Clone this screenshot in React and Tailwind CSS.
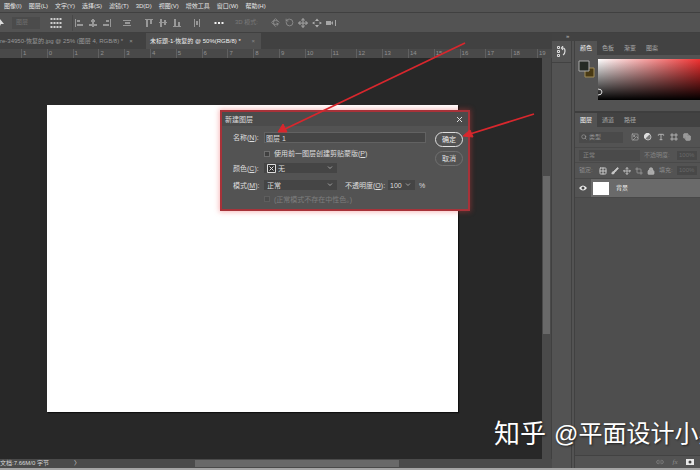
import React from "react";
import {
  Rotate3d, RotateCcw, Move, Image, Type, Frame, Copy, Search, Brush, Crop, Lock, Link2, Grid2x2,
} from "lucide-react";

const menus = ["图像(I)", "图层(L)", "文字(Y)", "选择(S)", "滤镜(T)", "3D(D)", "视图(V)", "增效工具", "窗口(W)", "帮助(H)"];
const marks = [1, 0, 1, 2, 3, 4, 5, 6, 7, 8, 9, 10, 11, 12, 13, 14, 15, 16, 17, 18];

function Chevron() {
  return (
    <svg viewBox="0 0 6 4" className="pointer-events-none absolute right-1 h-1 w-1.5" fill="none" stroke="#a0a0a0">
      <path d="M1 .5l2 2 2-2" />
    </svg>
  );
}

function Tool({ label, children, className = "" }) {
  return (
    <button type="button" aria-label={label} className={`flex h-3 w-3 shrink-0 items-center justify-center ${className}`}>
      {children}
    </button>
  );
}

function Bars({ d }) {
  return (
    <svg viewBox="0 0 8 8" className="h-2 w-2" fill="#989898">
      <path d={d} />
    </svg>
  );
}

function OptionsBar() {
  return (
    <div className="flex h-5 items-center border-b border-[#404040] text-[#989898]">
      <svg viewBox="0 0 4 8" className="h-2 w-1" fill="#ddd"><path d="M0 0l4 5H1L0 7z" /></svg>
      <div className="relative ml-2 flex h-3 w-7 items-center bg-[#4b4b4b]">
        <select aria-label="自动选择" disabled className="w-full appearance-none pl-1 text-[#707070]"><option>图层</option></select>
      </div>
      <Tool label="显示变换控件" className="ml-2.5">
        <svg viewBox="0 0 11 10" className="h-2.5 w-3" fill="#cfcfcf">
          <path d="M0 0h2v2H0zM3 0h2v2H3zM6 0h2v2H6zM9 0h2v2H9zM0 4h2v2H0zM3 4h2v2H3zM6 4h2v2H6zM9 4h2v2H9zM0 8h2v2H0zM3 8h2v2H3zM6 8h2v2H6zM9 8h2v2H9z" />
        </svg>
      </Tool>
      <span className="ml-2.5 h-4 border-l border-[#484848]" />
      <Tool label="左对齐"><Bars d="M0 0h1v8H0zM2 1h3v2H2zM2 5h6v2H2z" /></Tool>
      <Tool label="水平居中对齐" className="ml-0.5"><Bars d="M3 0h2v8H3zM2 1h4v2H2zM0 5h8v2H0z" /></Tool>
      <Tool label="右对齐" className="ml-0.5"><Bars d="M7 0h1v8H7zM3 1h3v2H3zM0 5h6v2H0z" /></Tool>
      <Tool label="分布" className="ml-2"><Bars d="M0 1h8v1H0zM2 3h5v2H2zM0 6h8v1H0z" /></Tool>
      <Tool label="顶对齐" className="ml-2.5"><Bars d="M0 0h8v1H0zM1 1h2v7H1zM5 1h2v4H5z" /></Tool>
      <Tool label="垂直居中对齐" className="ml-0.5"><Bars d="M0 3h8v1H0zM1 0h2v8H1zM5 1h2v5H5z" /></Tool>
      <Tool label="底对齐" className="ml-0.5"><Bars d="M0 7h8v1H0zM1 0h2v7H1zM5 3h2v4H5z" /></Tool>
      <Tool label="垂直分布" className="ml-2"><Bars d="M1 0h1v8H1zM3 2h2v4H3zM6 0h1v8H6z" /></Tool>
      <Tool label="更多选项" className="ml-2.5">
        <svg viewBox="0 0 9 2" className="h-0.5 w-2.5" fill="#f2f2f2"><path d="M0 0h2v2H0zM3.5 0h2v2h-2zM7 0h2v2H7z" /></svg>
      </Tool>
      <span className="ml-2.5 w-7 text-[#7a7a7a]">3D 模式:</span>
      <Tool label="环绕" className="ml-1.5"><Rotate3d size={9} /></Tool>
      <Tool label="滚动" className="ml-0.5"><RotateCcw size={9} /></Tool>
      <Tool label="平移" className="ml-0.5"><Move size={10} strokeWidth={3} /></Tool>
      <Tool label="滑动" className="ml-0.5">
        <svg viewBox="0 0 10 9" className="h-2.5 w-2.5" fill="#b0b0b0"><path d="M5 0l2 2.5H3zM5 9L3 6.500h4zM0 4.500L2.500 3v3zM10 4.500L7.500 3v3z" /></svg>
      </Tool>
      <Tool label="缩放相机" className="ml-0.5">
        <svg viewBox="0 0 10 6" className="h-1.5 w-2.5" fill="#a6a6a6"><path d="M0 1h5v4H0zM5 3l2-2v4zM9 0h1v6H9z" /></svg>
      </Tool>
    </div>
  );
}

function Editor() {
  return (
    <main className="flex min-w-0 flex-1 flex-col">
      <div className="flex h-4 bg-[#414141]" role="tablist">
        <button type="button" role="tab" aria-selected="false" className="flex w-[146px] items-center gap-1.5 whitespace-nowrap text-[#999]">
          <span>re-34950-恢复的.jpg @ 25% (图层 4, RGB/8) *</span><span>×</span>
        </button>
        <button type="button" role="tab" aria-selected="true" className="flex w-[115px] items-center justify-between bg-[#505050] pr-1.5 pl-1 whitespace-nowrap text-[#f0f0f0]">
          <span>未标题-1-恢复的 @ 50%(RGB/8) *</span><span className="text-[#8a8a8a]">×</span>
        </button>
      </div>
      <div className="flex h-[9px] items-center bg-[#494949] pl-[21px] text-[#929292]">
        {marks.map((m, i) => (
          <span key={i} className="min-w-0 flex-1 border-l border-[#606060] pl-px">{m}</span>
        ))}
        <span className="w-[15px] border-l border-[#606060] pl-px">19</span>
      </div>
      <div className="flex flex-1">
        <div className="flex flex-1 bg-[#282828] pt-[47px] pr-[84px] pb-[47px] pl-[47px]">
          <div className="flex-1 bg-white shadow-[1px_1px_1px_#111]" />
        </div>
        <div className="flex w-2.5 flex-col border-r border-[#404040] bg-[#4a4a4a] px-px pt-[118px]">
          <div className="h-[158px] bg-[#696969]" />
        </div>
      </div>
      <div className="flex h-[9px] items-center bg-[#4a4a4a] text-[#d8d8d8]">
        <span className="w-[74px] whitespace-nowrap">文档:7.66M/0 字节</span>
        <span className="w-[121px]">〉</span>
        <div className="h-[7px] flex-1 pr-[153px]"><div className="h-full bg-[#696969]" /></div>
      </div>
    </main>
  );
}

function PanelTabs({ names }) {
  return (
    <div className="flex h-[14px] bg-[#424242]" role="tablist">
      {names.map((n, i) => (
        <button key={n} type="button" role="tab" aria-selected={i === 0} className={i === 0 ? "w-[22px] bg-[#535353] text-[#f0f0f0]" : "w-[22px] text-[#a8a8a8]"}>{n}</button>
      ))}
    </div>
  );
}

function Layers() {
  return (
    <section className="flex flex-1 flex-col border-t-2 border-[#3e3e3e]">
      <PanelTabs names={["图层", "通道", "路径"]} />
      <div className="flex h-5 items-center pl-1 text-[#b0b0b0]">
        <div className="flex h-[11px] w-11 items-center gap-0.5 bg-[#4a4a4a] pl-0.5">
          <Search size={6} />
          <select aria-label="筛选类型" className="w-6 appearance-none text-[#909090]"><option>类型</option></select>
        </div>
        <Tool label="像素图层" className="ml-1.5"><Image size={8} /></Tool>
        <Tool label="调整图层" className="ml-px">
          <svg viewBox="0 0 8 8" className="h-2 w-2"><circle cx="4" cy="4" r="3" fill="#777" stroke="#b8b8b8" /><path d="M1 6A3 3 0 0 1 6 1z" fill="#ddd" /></svg>
        </Tool>
        <Tool label="文字图层" className="ml-px"><Type size={8} strokeWidth={3} /></Tool>
        <Tool label="形状图层" className="ml-px"><Frame size={8} strokeWidth={3} /></Tool>
        <Tool label="智能对象" className="ml-px"><Copy size={8} fill="#999" /></Tool>
      </div>
      <div className="flex h-[15px] items-center border-t border-[#494949] pl-1 text-[#858585]">
        <div className="flex h-[11px] w-[61px] items-center bg-[#4a4a4a] pl-1">
          <select aria-label="混合模式" disabled className="w-full appearance-none"><option>正常</option></select>
        </div>
        <label htmlFor="layer-opacity" className="ml-1 w-[33px] whitespace-nowrap">不透明度:</label>
        <input id="layer-opacity" disabled defaultValue="100%" className="h-[9px] w-5 bg-[#484848] px-0.5 text-[#686868]" />
      </div>
      <div className="flex h-4 items-center border-t border-[#494949] pl-1 text-[#8c8c8c]">
        <span className="w-4">锁定:</span>
        <Tool label="锁定透明像素" className="ml-0.5"><Grid2x2 size={8} color="#c8c8c8" strokeWidth={3} /></Tool>
        <Tool label="锁定图像像素"><Brush size={8} color="#c8c8c8" fill="#c8c8c8" /></Tool>
        <Tool label="锁定位置"><Move size={8} color="#b8b8b8" strokeWidth={3} /></Tool>
        <Tool label="防止嵌套"><Crop size={8} color="#aaa" /></Tool>
        <Tool label="锁定全部"><Lock size={8} color="#bbb" fill="#aaa" /></Tool>
        <label htmlFor="layer-fill" className="ml-0.5 w-[18px] whitespace-nowrap">填充:</label>
        <input id="layer-fill" disabled defaultValue="100%" className="h-[9px] w-5 bg-[#484848] px-0.5 text-[#686868]" />
      </div>
      <div className="flex h-5 border-y border-[#484848]">
        <Tool label="可见性" className="mx-0.5 self-center">
          <svg viewBox="0 0 8 6" className="h-1.5 w-2"><path d="M0 3Q4-2 8 3 4 8 0 3" fill="#eee" /><circle cx="4" cy="3" r="1.500" fill="#444" /></svg>
        </Tool>
        <button type="button" className="flex flex-1 items-center gap-[7px] bg-[#6a6a6a] pl-0.5 text-[#f4f4f4]">
          <span className="h-[13px] w-4 bg-white" />背景
        </button>
      </div>
      <div className="flex-1 bg-[#4e4e4e]" />
      <div className="flex h-[13px] items-center justify-end gap-[3px] border-t border-[#424242] pr-1 text-[#8c8c8c]">
        <Tool label="链接图层"><Link2 size={8} /></Tool>
        <Tool label="图层样式"><i className="font-['Liberation_Serif',serif] text-[7px]">fx</i></Tool>
        <Tool label="添加蒙版">
          <svg viewBox="0 0 8 6" className="h-1.5 w-2"><path d="M0 0h8v6H0z" fill="#e8e8e8" /><circle cx="4" cy="3" r="1.500" fill="#444" /></svg>
        </Tool>
      </div>
    </section>
  );
}

function Panels() {
  return (
    <aside className="flex w-[148px] shrink-0 flex-col">
      <div className="h-2 bg-[#424242] pl-3.5 leading-[6px] text-[#bbb]">»</div>
      <div className="flex flex-1">
        <div className="w-5 border-r border-[#414141]">
          <button type="button" aria-label="历史记录" className="flex h-[22px] w-full items-center justify-center border-b border-[#424242]">
            <svg viewBox="0 0 9 11" className="h-[11px] w-[9px]" fill="none" stroke="#ddd"><path d="M.5.500h2v2h-2zM.5 4.500h2v2h-2zM.5 8.500h2v2h-2z" /><path d="M5 2h1q2 0 2 3T6 9M6 0L4.500 2 6 4" strokeWidth="1.200" /></svg>
          </button>
        </div>
        <div className="ml-0.5 flex min-w-0 flex-1 flex-col border-l border-[#414141]">
          <section className="h-[70px]">
            <PanelTabs names={["颜色", "色板", "渐变", "图案"]} />
            <div className="flex pt-1 pl-[3px]">
              <svg viewBox="0 0 18 18" className="mt-px mr-0.5 h-[18px] w-[18px]" role="img" aria-label="前景色与背景色">
                <path d="M7 8h9v9H7z" fill="#493a14" stroke="#a08c58" />
                <path d="M1 1h10v10H1z" fill="#262b25" stroke="#aaa" />
              </svg>
              <div className="flex h-[41px] flex-1 items-end bg-[linear-gradient(to_bottom,transparent,black),linear-gradient(to_right,white,#f79a9a_50%,#f13131)]">
                <svg viewBox="0 0 5 8" className="mb-1 h-2 w-[5px]" fill="none" stroke="#ddd"><path d="M0 1q4 0 4 3t-4 3" /></svg>
              </div>
            </div>
          </section>
          <Layers />
        </div>
      </div>
    </aside>
  );
}

function Dialog() {
  return (
    <form role="dialog" aria-label="新建图层" onSubmit={(e) => e.preventDefault()} className="absolute top-[110px] left-[220px] h-[101px] w-[250px] border-2 border-[#a73239] bg-[#535353] text-[7px] text-[#dedede] shadow-[0_0_5px_1px_rgba(235,60,60,0.35)]">
      <div className="flex h-[14px] items-center justify-between bg-[#4b4b4b] pr-[5px] pl-[3px]">
        <span>新建图层</span>
        <button type="button" aria-label="关闭">
          <svg viewBox="0 0 7 7" className="h-[7px] w-[7px]" stroke="#ddd"><path d="M1 1l5 5M6 1L1 6" /></svg>
        </button>
      </div>
      <div className="flex pt-1.5">
        <div className="flex flex-1 flex-col pl-[11px]">
          <div className="flex h-[11px] items-center">
            <label htmlFor="name" className="w-[31px]">名称(<u>N</u>):</label>
            <input id="name" defaultValue="图层 1" className="h-[11px] w-[162px] border border-[#626262] bg-[#454545] px-px" />
          </div>
          <label className="mt-[5px] flex h-[11px] items-center gap-1 pl-[31px] whitespace-nowrap">
            <input type="checkbox" className="h-1.5 w-1.5 appearance-none border border-[#6e6e6e] bg-[#404040]" />
            <span>使用前一图层创建剪贴蒙版(<u>P</u>)</span>
          </label>
          <div className="mt-1 flex h-[10px] items-center">
            <label htmlFor="color" className="w-[31px]">颜色(<u>C</u>):</label>
            <div className="relative flex h-[10px] w-[73px] items-center gap-0.5 bg-[#454545] pl-[3px]">
              <svg viewBox="0 0 9 9" className="h-[9px] w-[9px] shrink-0" fill="#333" stroke="#ddd"><path d="M.5.500h8v8h-8zM2.500 2.500l4 4M6.500 2.500l-4 4" /></svg>
              <select id="color" className="w-full appearance-none"><option>无</option></select>
              <Chevron />
            </div>
          </div>
          <div className="mt-[7px] flex h-[10px] items-center">
            <label htmlFor="mode" className="w-[31px]">模式(<u>M</u>):</label>
            <div className="relative flex h-[10px] w-[73px] items-center bg-[#454545] pl-[3px]">
              <select id="mode" className="w-full appearance-none"><option>正常</option></select>
              <Chevron />
            </div>
            <label htmlFor="opacity" className="ml-2 w-[43px] whitespace-nowrap">不透明度(<u>O</u>):</label>
            <div className="relative flex h-[10px] w-[27px] items-center bg-[#454545]">
              <input id="opacity" defaultValue="100" className="w-4 pl-0.5" />
              <Chevron />
            </div>
            <span className="ml-1">%</span>
          </div>
          <label className="mt-1 flex h-[10px] items-center gap-1 pl-[31px] whitespace-nowrap text-[#7e7e7e]">
            <input type="checkbox" disabled className="h-1.5 w-1.5 appearance-none border border-[#5e5e5e] bg-[#4c4c4c]" />
            <span>(正常模式不存在中性色。)</span>
          </label>
        </div>
        <div className="mr-[5px] flex w-7 flex-col gap-1">
          <button type="submit" className="h-[15px] rounded-full border border-[#dedede] text-[#f0f0f0]">确定</button>
          <button type="button" className="h-[15px] rounded-full border border-[#707070]">取消</button>
        </div>
      </div>
    </form>
  );
}

export default function App() {
  return (
    <div lang="zh-CN" className="relative flex min-h-screen flex-col overflow-hidden border-b-2 border-[#a5a5a5] bg-[#535353] font-['Liberation_Sans','Noto_Sans_CJK_SC',sans-serif] text-[6px] leading-[9px] text-[#e6e6e6]">
      <nav className="flex h-[13px] items-center gap-[7px] border-b border-[#404040] pl-1 whitespace-nowrap">
        {menus.map((m) => <button type="button" key={m}>{m}</button>)}
      </nav>
      <OptionsBar />
      <div className="flex flex-1">
        <Editor />
        <Panels />
      </div>
      <Dialog />
      <svg viewBox="0 0 700 470" className="pointer-events-none absolute top-0 left-0 h-[470px] w-[700px]" fill="#d8272d" stroke="#d8272d">
        <path d="M465 43L285 129" strokeWidth="1.800" />
        <path d="M278 132l5-8 4 8z" />
        <path d="M534 114L470 134" strokeWidth="1.800" />
        <path d="M463 136l7-6 3 7z" />
      </svg>
      <div className="pointer-events-none absolute right-0 bottom-4 left-[494px] flex items-center gap-2 leading-9 whitespace-nowrap text-white [text-shadow:1px_1px_2px_#222]">
        <span className="text-[26px]">知乎</span>
        <span className="text-2xl leading-9">@平面设计小吴</span>
      </div>
    </div>
  );
}
